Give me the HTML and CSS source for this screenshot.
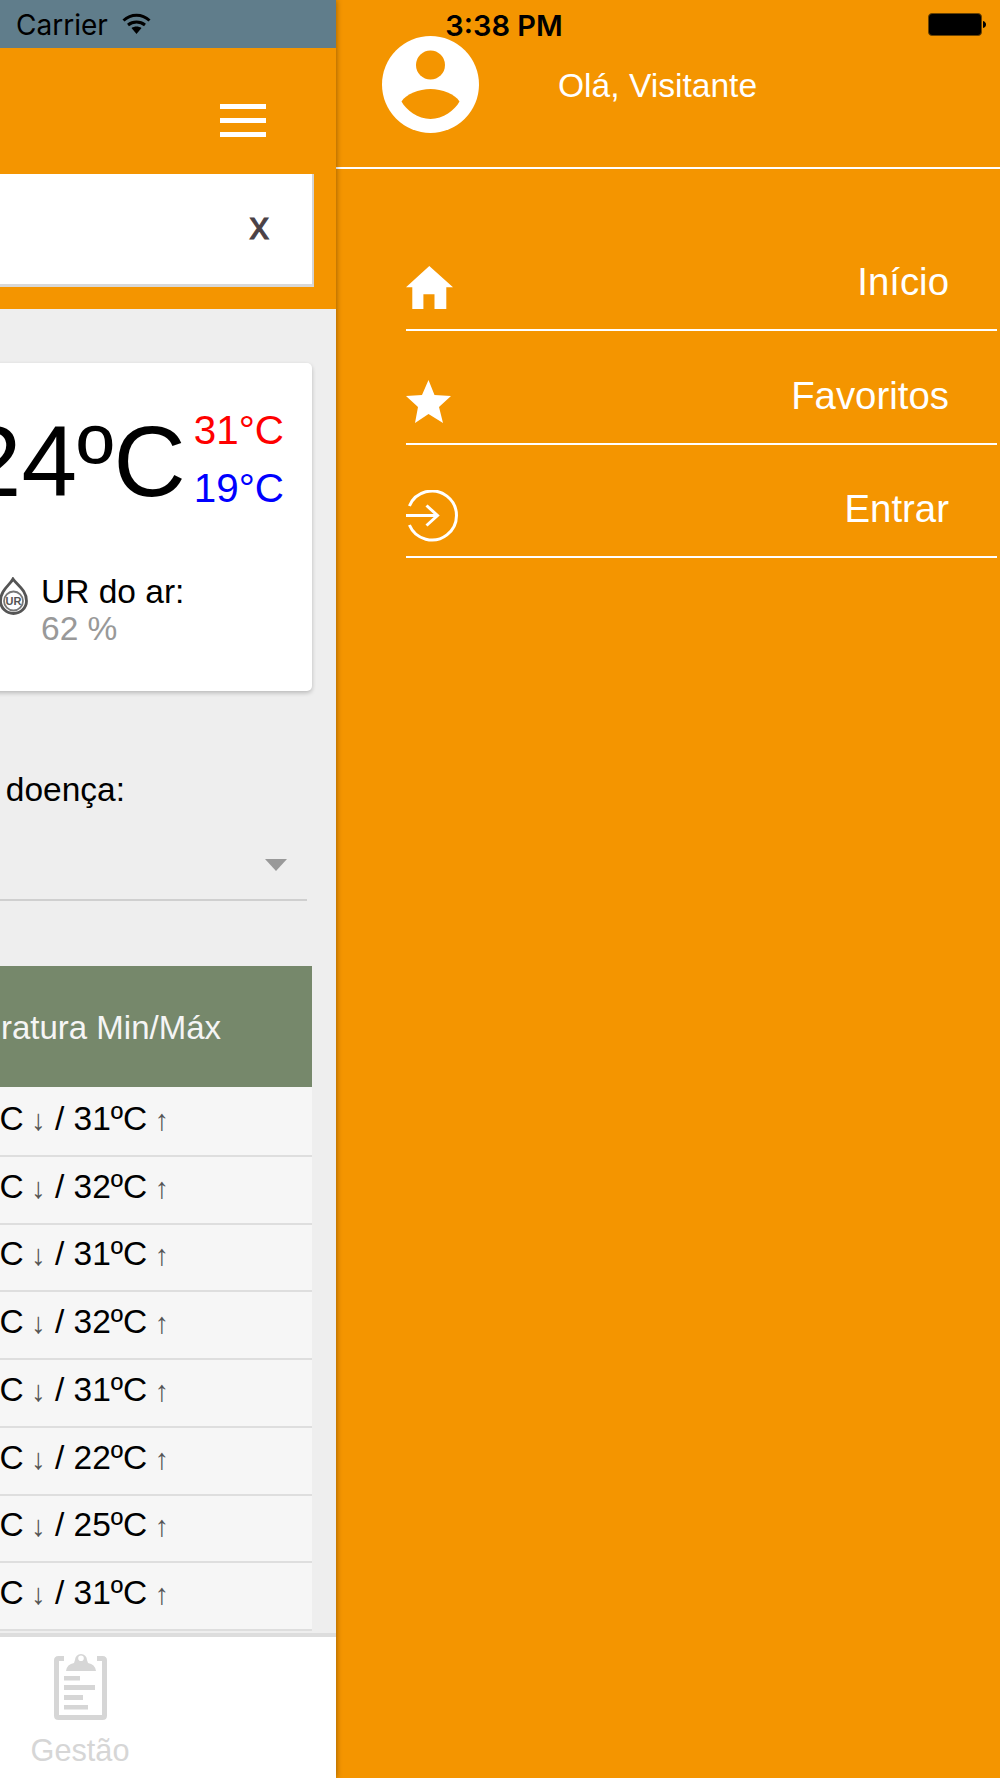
FILE: index.html
```html
<!DOCTYPE html>
<html lang="pt">
<head>
<meta charset="utf-8">
<title>Menu</title>
<link rel="stylesheet" href="styles.css">
</head>
<body>
<div class="app">
  <section class="panel">
    <div class="panel-status"></div>
    <header class="topbar">
      <div class="menu-row">
        <div class="burger"><span></span><span></span><span></span></div>
      </div>
      <div class="search"><span class="clear">x</span></div>
    </header>
    <main class="content">
      <div class="card">
        <div class="temp-row">
          <div class="temp-now">24ºC</div>
          <div class="temp-range">
            <div class="hot">31°C</div>
            <div class="cold">19°C</div>
          </div>
        </div>
        <div class="humidity">
          <svg class="ur-icon" viewBox="0 0 30 38" aria-hidden="true">
            <path d="M14 2 C11 8 1.500 13 1.500 24 A13 12.500 0 0 0 27.500 24 C27.500 13 18 8 14 2 Z" fill="none" stroke="#555" stroke-width="2.800"/>
            <circle cx="14.500" cy="24" r="9.500" fill="none" stroke="#777" stroke-width="1.800"/>
            <text x="14.500" y="28" class="ur-text">UR</text>
          </svg>
          <div class="humidity-text">
            <div>UR do ar:</div>
            <div class="muted">62 %</div>
          </div>
        </div>
      </div>
      <div class="field-label">Selecione a doença:</div>
      <div class="select"><span class="caret"></span></div>
      <div class="table">
        <div class="thead"><span>Temperatura Min/Máx</span></div>
        <div class="rows">
          <div class="row"><span>19ºC <i>↓</i> / 31ºC <i>↑</i></span></div>
          <div class="row"><span>19ºC <i>↓</i> / 32ºC <i>↑</i></span></div>
          <div class="row"><span>20ºC <i>↓</i> / 31ºC <i>↑</i></span></div>
          <div class="row"><span>19ºC <i>↓</i> / 32ºC <i>↑</i></span></div>
          <div class="row"><span>19ºC <i>↓</i> / 31ºC <i>↑</i></span></div>
          <div class="row"><span>18ºC <i>↓</i> / 22ºC <i>↑</i></span></div>
          <div class="row"><span>17ºC <i>↓</i> / 25ºC <i>↑</i></span></div>
          <div class="row"><span>18ºC <i>↓</i> / 31ºC <i>↑</i></span></div>
        </div>
      </div>
    </main>
    <nav class="tabbar">
      <div class="tab">
        <svg class="tab-icon" viewBox="0 0 53 68" aria-hidden="true">
          <path d="M10 6.500 H4.500 Q2.500 6.500 2.500 8.500 V63.500 Q2.500 65.500 4.500 65.500 H48.500 Q50.500 65.500 50.500 63.500 V8.500 Q50.500 6.500 48.500 6.500 H43" fill="none" stroke="#d6d6d6" stroke-width="5"/>
          <path fill-rule="evenodd" fill="#d6d6d6" d="M12 19 Q13 12 20 11 L21 8 A6 6 0 0 1 33 8 L34 11 Q41 12 42 19 Z M27 3.500 A2.800 2.800 0 1 0 27 9.100 A2.800 2.800 0 1 0 27 3.500 Z"/>
          <path fill="#d6d6d6" d="M10 24 H26 V28.500 H10 Z M10 33 H41 V38 H10 Z M10 43 H29 V48 H10 Z M10 53 H34 V57.500 H10 Z"/>
        </svg>
        <div class="tab-label">Gestão</div>
      </div>
    </nav>
  </section>

  <aside class="drawer">
    <div class="drawer-head">
      <svg class="avatar" viewBox="0 0 97 97" aria-hidden="true">
        <circle cx="48.500" cy="48.500" r="48.500" fill="#fff"/>
        <circle cx="48.500" cy="29" r="14.500" fill="#f49500"/>
        <path fill="#f49500" d="M19.500 65.500 C24 58 37 53 48.500 53 C60 53 73 58 77.500 65.500 C73 74 61 83 48.500 83 C36 83 24 74 19.500 65.500 Z"/>
      </svg>
      <div class="greeting">Olá, Visitante</div>
    </div>
    <ul class="menu">
      <li class="menu-item">
        <svg class="ic ic-home" viewBox="0 0 47 43" aria-hidden="true">
          <path fill="#fff" d="M23.300 0 L47 21.300 H40.300 V43 H28.500 V28.300 H17.400 V43 H6.300 V21.300 H0 Z"/>
        </svg>
        <span>Início</span>
      </li>
      <li class="menu-item">
        <svg class="ic ic-star" viewBox="0 0 45 43" aria-hidden="true">
          <path fill="#fff" d="M22.500 0 L28.500 15 L45 16 L33 27 L37 43 L22.500 34 L9 43 L12 27 L0 16 L16 15 Z"/>
        </svg>
        <span>Favoritos</span>
      </li>
      <li class="menu-item">
        <svg class="ic ic-login" viewBox="0 0 52 52" aria-hidden="true">
          <path d="M3.400 16 A24.500 24.500 0 1 1 3.400 35" fill="none" stroke="#fff" stroke-width="3"/>
          <path d="M0 25.500 H31 M20.500 15.500 L31.500 25.500 L20.500 35.500" fill="none" stroke="#fff" stroke-width="3"/>
        </svg>
        <span>Entrar</span>
      </li>
    </ul>
  </aside>

  <div class="statusbar">
    <div class="sb-left">
      <span>Carrier</span>
      <svg class="wifi" viewBox="0 0 29 22" aria-hidden="true">
        <path d="M1.500 7.500 C9 0.500 20 0.500 27.500 7.500 M6 12 C11 8 18 8 23 12" fill="none" stroke="#000" stroke-width="3"/>
        <path d="M9.500 15 C12.500 13 16.500 13 19.500 15 L14.500 21 Z" fill="#000"/>
      </svg>
    </div>
    <div class="sb-time">3:38 PM</div>
    <div class="sb-right">
      <svg class="battery" viewBox="0 0 58 24" aria-hidden="true">
        <rect x="0.500" y="0.500" width="53" height="22" rx="3.500" fill="#000" stroke="#6b4300"/>
        <path d="M55 8 Q58 9 58 11.500 Q58 14 55 15 Z" fill="#000"/>
      </svg>
    </div>
  </div>
</div>
</body>
</html>
```

FILE: styles.css
```css
* { box-sizing: border-box; }
html, body { margin: 0; padding: 0; }
body {
  width: 1000px;
  height: 1778px;
  overflow: hidden;
  font-family: "Liberation Sans", Arial, sans-serif;
  color: #000;
}
.app {
  position: relative;
  display: flex;
  width: 1000px;
  height: 1778px;
  overflow: hidden;
  background: #f49500;
}

/* left panel */
.panel {
  position: relative;
  z-index: 1;
  display: flex;
  flex-direction: column;
  width: 336px;
  height: 1778px;
  overflow: hidden;
  background: #eee;
  box-shadow: 0 0 6px rgba(0, 0, 0, .4);
}
.panel-status { height: 48px; flex: none; background: #607d8b; }
.topbar { height: 261px; flex: none; background: #f49500; }
.menu-row {
  display: flex;
  justify-content: flex-end;
  height: 126px;
  padding: 56px 70px 0 0;
}
.burger { display: flex; flex-direction: column; gap: 9px; width: 46px; }
.burger span { display: block; height: 5px; background: #fff; }
.search {
  display: flex;
  justify-content: flex-end;
  align-items: center;
  width: 314px;
  height: 113px;
  padding-right: 43px;
  background: #fff;
  border-right: 2px solid #d4d4d4;
  border-bottom: 3px solid #d8d8d8;
}
.clear {
  font-size: 39px;
  font-weight: 400;
  line-height: 40px;
  color: #4a4146;
  -webkit-text-stroke: 1px #4a4146;
  position: relative;
  top: -3px;
}
.content { flex: 1; min-height: 0; overflow: hidden; background: #eee; padding-top: 54px; }

.card {
  width: 322px;
  height: 328px;
  margin-left: -10px;
  background: #fff;
  border-radius: 5px;
  box-shadow: 0 2px 4px rgba(0, 0, 0, .22);
}
.temp-row {
  display: flex;
  justify-content: flex-end;
  align-items: flex-start;
  height: 200px;
  padding: 41px 28px 0 0;
}
.temp-now { font-size: 100px; line-height: 115px; white-space: nowrap; margin-right: 8px; }
.temp-range { font-size: 40.400px; line-height: 57.500px; margin-top: -2px; }
.hot { color: #f00; }
.cold { color: #00f; }
.humidity { display: flex; gap: 12px; padding-left: 9px; margin-top: 11px; }
.ur-icon { width: 30px; height: 38px; flex: none; margin-top: 3px; }
.ur-text { font-size: 11px; font-weight: 700; text-anchor: middle; fill: #555; }
.humidity-text { font-size: 33.500px; line-height: 36.500px; }
.muted { color: #999; }

.field-label {
  display: flex;
  justify-content: flex-end;
  padding-right: 211px;
  margin-top: 80px;
  font-size: 33.500px;
  line-height: 38px;
  white-space: nowrap;
}
.select {
  display: flex;
  justify-content: flex-end;
  width: 307px;
  height: 86px;
  margin-top: 6px;
  padding: 44px 20px 0 0;
  border-bottom: 2px solid #cfcfcf;
}
.caret {
  width: 0;
  height: 0;
  border-left: 11px solid transparent;
  border-right: 11px solid transparent;
  border-top: 12px solid #999;
}
.table { width: 312px; margin-top: 65px; }
.thead {
  display: flex;
  justify-content: flex-end;
  align-items: center;
  height: 121px;
  padding: 3px 91px 0 0;
  background: #76886b;
  color: #f5f5f5;
  font-size: 33px;
  white-space: nowrap;
}
.rows { padding-top: 2px; background: #f6f6f6; }
.row {
  display: flex;
  justify-content: flex-end;
  align-items: center;
  height: 67.750px;
  padding: 0 143px 6px 0;
  background: #f6f6f6;
  border-bottom: 2px solid #dedede;
  font-size: 33.500px;
  white-space: nowrap;
}
.row i { font-style: normal; font-size: 29px; color: #555; line-height: 1; margin-left: -2px; }

.tabbar {
  flex: none;
  height: 145px;
  background: #fff;
  border-top: 4px solid #ddd;
  padding-top: 15px;
}
.tab { display: flex; flex-direction: column; align-items: center; width: 160px; }
.tab-icon { width: 53px; height: 68px; }
.tab-label { font-size: 30.700px; line-height: 36px; margin-top: 13px; color: #d6d6d6; }

/* drawer */
.drawer { flex: 1; background: #f49500; color: #fff; }
.drawer-head {
  display: flex;
  align-items: flex-start;
  height: 169px;
  padding: 36px 0 0 46px;
  border-bottom: 2px solid #fff;
}
.avatar { width: 97px; height: 97px; flex: none; }
.greeting { margin: 31px 0 0 79px; font-size: 33.600px; line-height: 38px; }
.menu { list-style: none; margin: 0; padding: 48.500px 3px 0 70px; }
.menu-item {
  display: flex;
  justify-content: space-between;
  align-items: flex-end;
  height: 113.500px;
  padding: 0 48px 20px 0;
  border-bottom: 2px solid #fff;
  font-size: 38.400px;
  line-height: 44px;
}
.menu-item span { margin-bottom: 5px; }
.ic { display: block; flex: none; }
.ic-home { width: 47px; height: 43px; }
.ic-star { width: 45px; height: 43px; }
.ic-login { width: 52px; height: 52px; margin-bottom: -6px; }

/* system status bar lies over both panels */
.statusbar {
  position: absolute;
  z-index: 2;
  top: 0;
  left: 0;
  right: 0;
  height: 48px;
  display: grid;
  grid-template-columns: 1fr auto 1fr;
  align-items: center;
  padding-top: 2px;
  font-family: Inter, "Liberation Sans", sans-serif;
  font-size: 28px;
  color: #000;
}
.sb-left { display: flex; align-items: center; gap: 14px; padding: 0 0 0 16px; }
.wifi { width: 29px; height: 22px; margin-top: -3px; }
.sb-time { font-weight: 600; font-size: 29px; margin-left: 8px; }
.sb-right { display: flex; justify-content: flex-end; padding-right: 14px; }
.battery { width: 58px; height: 24px; margin-top: -1px; }
```
